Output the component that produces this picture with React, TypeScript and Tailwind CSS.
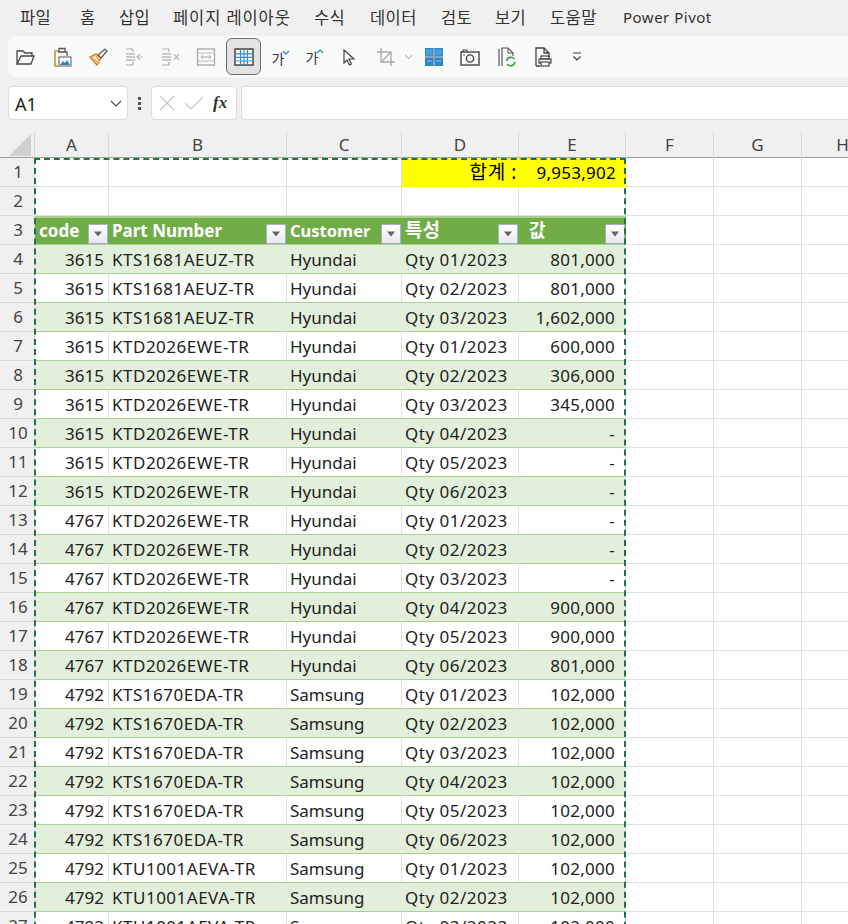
import React from "react";

const cols = "grid-cols-[35px_74px_178px_115px_117px_107px_88px_88px_82px]";

const menus = [
  { label: "파일", w: "w-[60px]" },
  { label: "홈", w: "w-[39px]" },
  { label: "삽입", w: "w-[54px]" },
  { label: "페이지 레이아웃", w: "w-[141px] tracking-[0.9px]" },
  { label: "수식", w: "w-[56px]" },
  { label: "데이터", w: "w-[71px]" },
  { label: "검토", w: "w-[54px]" },
  { label: "보기", w: "w-[55px]" },
  { label: "도움말", w: "w-[73px]" },
];

type Row = [string, string, string, string, string];

const rows: Row[] = [
  ["3615", "KTS1681AEUZ-TR", "Hyundai", "Qty 01/2023", "801,000"],
  ["3615", "KTS1681AEUZ-TR", "Hyundai", "Qty 02/2023", "801,000"],
  ["3615", "KTS1681AEUZ-TR", "Hyundai", "Qty 03/2023", "1,602,000"],
  ["3615", "KTD2026EWE-TR", "Hyundai", "Qty 01/2023", "600,000"],
  ["3615", "KTD2026EWE-TR", "Hyundai", "Qty 02/2023", "306,000"],
  ["3615", "KTD2026EWE-TR", "Hyundai", "Qty 03/2023", "345,000"],
  ["3615", "KTD2026EWE-TR", "Hyundai", "Qty 04/2023", "-"],
  ["3615", "KTD2026EWE-TR", "Hyundai", "Qty 05/2023", "-"],
  ["3615", "KTD2026EWE-TR", "Hyundai", "Qty 06/2023", "-"],
  ["4767", "KTD2026EWE-TR", "Hyundai", "Qty 01/2023", "-"],
  ["4767", "KTD2026EWE-TR", "Hyundai", "Qty 02/2023", "-"],
  ["4767", "KTD2026EWE-TR", "Hyundai", "Qty 03/2023", "-"],
  ["4767", "KTD2026EWE-TR", "Hyundai", "Qty 04/2023", "900,000"],
  ["4767", "KTD2026EWE-TR", "Hyundai", "Qty 05/2023", "900,000"],
  ["4767", "KTD2026EWE-TR", "Hyundai", "Qty 06/2023", "801,000"],
  ["4792", "KTS1670EDA-TR", "Samsung", "Qty 01/2023", "102,000"],
  ["4792", "KTS1670EDA-TR", "Samsung", "Qty 02/2023", "102,000"],
  ["4792", "KTS1670EDA-TR", "Samsung", "Qty 03/2023", "102,000"],
  ["4792", "KTS1670EDA-TR", "Samsung", "Qty 04/2023", "102,000"],
  ["4792", "KTS1670EDA-TR", "Samsung", "Qty 05/2023", "102,000"],
  ["4792", "KTS1670EDA-TR", "Samsung", "Qty 06/2023", "102,000"],
  ["4792", "KTU1001AEVA-TR", "Samsung", "Qty 01/2023", "102,000"],
  ["4792", "KTU1001AEVA-TR", "Samsung", "Qty 02/2023", "102,000"],
  ["4792", "KTU1001AEVA-TR", "Samsung", "Qty 03/2023", "102,000"],
];

const RowHead = ({ n }: { n: number }) => (
  <div className="flex items-center justify-center pl-0.5 bg-[#f0f0f0] border-r border-b border-[#d9d9d9] text-[#444] text-[17px]">
    {n}
  </div>
);

const Blank = () => <div className="border-r border-b border-[#e0e0e0]" />;

const FilterBtn = () => (
  <div className="absolute right-[1px] top-[6px] w-[20px] h-[20px] flex items-center justify-center border border-[#a7aec8] bg-gradient-to-b from-white to-[#e6e8f0]">
    <svg width="10" height="6" viewBox="0 0 10 6">
      <path d="M1 0.5h8L5 5.5z" fill="#666" />
    </svg>
  </div>
);

const HeadCell = ({ text, className = "" }: { text: string; className?: string }) => (
  <div className={`relative bg-[#70ad47] text-white font-bold border-t-2 border-[#a9d08e] border-b border-b-[#a9d08e] pl-[3px] whitespace-nowrap overflow-hidden leading-[26px] ${className}`}>
    <span>{text}</span>
    <FilterBtn />
  </div>
);

const Icon = ({ children, className = "" }: { children: React.ReactNode; className?: string }) => (
  <div className={`w-[36px] h-[36px] flex items-center justify-center ${className}`}>
    <svg width="22" height="22" viewBox="0 0 22 22" fill="none">
      {children}
    </svg>
  </div>
);

const Toolbar = () => (
  <div className="ml-2 h-[41px] flex items-center bg-[#f9fbfb] rounded-l-lg">
    <Icon>
      <path d="M2 18V5h6l2 2h7v3M2 18h14l3-8H6z" stroke="#444" strokeWidth="1.3" />
    </Icon>
    <Icon className="ml-[1px]">
      <path d="M6 5H3v15h3" stroke="#d08a35" strokeWidth="1.5" />
      <path d="M7 6V2.5h6V6M6 6h9v4" stroke="#555" strokeWidth="1.3" />
      <rect x="7" y="11" width="12" height="9" fill="#fff" stroke="#555" strokeWidth="1" />
      <path d="M8 19l3-4 2 2 2-3 3 5z" fill="#2f7fc4" />
    </Icon>
    <Icon>
      <path d="M2 11l7 8 4-7-5-4z" fill="#f6e3c4" stroke="#d9821f" strokeWidth="1.4" />
      <path d="M5 12l4 4M8 10l3 4" stroke="#d9821f" strokeWidth="1" />
      <path d="M10 9l7-6 2 2-6 7z" fill="#fff" stroke="#555" strokeWidth="1.2" />
    </Icon>
    <Icon className="-ml-[1px]">
      <path d="M3 3h7M3 19h7M10 3v3M10 16v3" stroke="#aaa" strokeWidth="1.2" />
      <path d="M3 8h9M3 11h9M3 14h9" stroke="#bbb" strokeWidth="1.6" />
      <path d="M20 11h-6M17 8l-3 3 3 3" stroke="#bbb" strokeWidth="1.2" />
    </Icon>
    <Icon>
      <path d="M3 3h7M3 19h7M10 3v3M10 16v3" stroke="#aaa" strokeWidth="1.2" />
      <path d="M3 8h9M3 11h9M3 14h9" stroke="#bbb" strokeWidth="1.6" />
      <path d="M15 8l5 6M20 8l-5 6" stroke="#bbb" strokeWidth="1.2" />
    </Icon>
    <Icon>
      <rect x="2.5" y="3" width="17" height="16" stroke="#aaa" strokeWidth="1.4" />
      <path d="M2.5 7h17M2.5 15h17" stroke="#bbb" strokeWidth="1.2" />
      <path d="M6 11h10M8 9l-2 2 2 2M14 9l2 2-2 2" stroke="#aaa" strokeWidth="1" />
    </Icon>
    <div className="ml-[2px] w-[35px] h-[37px] flex items-center justify-center bg-[#e3e3e3] border border-[#6e6e6e] rounded-md">
      <svg width="20" height="18" viewBox="0 0 20 18" fill="none">
        <rect x="1" y="1" width="18" height="16" fill="#fff" stroke="#444" strokeWidth="1.5" />
        <path d="M1 5.8h18M1 9.3h18M1 13h18M6.6 2v15M10 2v15M13.4 2v15" stroke="#2f8fd8" strokeWidth="1.2" />
      </svg>
    </div>
    <div className="w-[34px] h-[36px] flex items-center justify-center text-[14px] text-[#333] relative">
      <span className="mt-[3px]">가</span>
      <svg className="absolute right-[5px] top-[11px]" width="8" height="6" viewBox="0 0 8 6" fill="none">
        <path d="M1 1l3 3 3-3" stroke="#2f8fd8" strokeWidth="1.4" />
      </svg>
    </div>
    <div className="w-[34px] h-[36px] flex items-center justify-center text-[14px] text-[#333] relative">
      <span className="mt-[1px]">가</span>
      <svg className="absolute right-[5px] top-[9px]" width="8" height="6" viewBox="0 0 8 6" fill="none">
        <path d="M1 5l3-3 3 3" stroke="#2f8fd8" strokeWidth="1.4" />
      </svg>
    </div>
    <Icon className="ml-[1px]">
      <path d="M7 4l10 9h-5l2.5 5-2 1-2.5-5L7 17z" fill="#fff" stroke="#444" strokeWidth="1.2" />
    </Icon>
    <Icon className="ml-[2px]">
      <path d="M6 2v14h14M2 6h14v14M6 16L16 6" stroke="#aaa" strokeWidth="1.4" />
    </Icon>
    <svg className="mr-[3px]" width="9" height="6" viewBox="0 0 9 6" fill="none">
      <path d="M1 1l3.5 3.5L8 1" stroke="#bbb" strokeWidth="1.1" />
    </svg>
    <Icon>
      <path d="M2 2h8.5v8.5H2zM11.5 2H20v8.5h-8.5zM2 11.5h8.5V20H2zM11.5 11.5H20V20h-8.5z" fill="#2e86cf" />
      <path d="M3 3h6.5v6.5H3zM12.500 3H19v6.500h-6.500z" fill="#4a9bdc" />
      <path d="M11 2v18M2 11h18" stroke="#7d8a94" strokeWidth="1.2" />
      <path d="M4 15h5M13 15h5" stroke="#9ac4e6" strokeWidth="1.2" />
    </Icon>
    <Icon>
      <rect x="2" y="6" width="18" height="13" stroke="#444" strokeWidth="1.4" />
      <path d="M4 6V4h4v2" stroke="#444" strokeWidth="1.2" />
      <circle cx="11" cy="12.5" r="3.6" stroke="#444" strokeWidth="1.4" />
      <path d="M4.5 9h1" stroke="#444" strokeWidth="1.4" />
    </Icon>
    <Icon className="ml-[1px]">
      <path d="M3 3v17M6 20V2h6l5 5v3" stroke="#555" strokeWidth="1.2" />
      <path d="M12 2v5h5" stroke="#555" strokeWidth="1" />
      <circle cx="14.5" cy="15.5" r="6" fill="#f9fbfb" />
      <path d="M10.5 15a4.5 4.5 0 0 1 8-2M19 16a4.5 4.5 0 0 1-8 2" stroke="#3aa53a" strokeWidth="1.6" />
    </Icon>
    <Icon>
      <path d="M4 20V2h8l5 5v4M4 20h4M12 2v5h5" stroke="#444" strokeWidth="1.3" />
      <rect x="9" y="10" width="8" height="3" stroke="#444" strokeWidth="1.2" />
      <rect x="7" y="13" width="12" height="4" stroke="#444" strokeWidth="1.2" />
      <rect x="9" y="16" width="8" height="4" fill="#fff" stroke="#444" strokeWidth="1.2" />
    </Icon>
    <div className="ml-[5px] w-[22px] flex justify-center">
      <svg width="10" height="10" viewBox="0 0 10 10" fill="none">
        <path d="M1 1h8M1.5 4.5L5 8l3.5-3.5" stroke="#333" strokeWidth="1.1" />
      </svg>
    </div>
  </div>
);

const FormulaBar = () => (
  <div className="mt-[9px] h-[34px] flex items-stretch">
    <div className="ml-2 w-[120px] flex items-center justify-between pl-[6px] pr-[4px] bg-white border border-[#dcdcdc] rounded-[4px] text-[18px] text-[#222]">
      <span className="mt-[2px]">A1</span>
      <svg width="12" height="7" viewBox="0 0 12 7" fill="none" className="mr-[1px]">
        <path d="M1 1l5 5 5-5" stroke="#444" strokeWidth="1.1" />
      </svg>
    </div>
    <div className="w-[23px] flex flex-col items-center justify-center gap-[2px]">
      <div className="w-[3px] h-[3px] bg-[#555]" />
      <div className="w-[3px] h-[3px] bg-[#555]" />
      <div className="w-[3px] h-[3px] bg-[#555]" />
    </div>
    <div className="w-[86px] flex items-center pl-[7px] bg-white border border-[#dcdcdc] rounded-[4px]">
      <svg width="16" height="16" viewBox="0 0 16 16" fill="none">
        <path d="M1 1l14 14M15 1L1 15" stroke="#c4c4c4" strokeWidth="1.1" />
      </svg>
      <svg className="ml-[9px]" width="20" height="16" viewBox="0 0 20 16" fill="none">
        <path d="M1 8l6 6L19 2" stroke="#c4c4c4" strokeWidth="1.1" />
      </svg>
      <span className="ml-[9px] text-[17px] font-bold italic text-[#333] [font-family:'Liberation_Serif',serif]">fx</span>
    </div>
    <div className="ml-[4px] flex-1 bg-white border border-[#dcdcdc] border-r-0 rounded-l-[4px]" />
  </div>
);

const ColHead = () => (
  <div className={`mt-[12px] h-[26px] grid ${cols} bg-[#f0f0f0] border-b border-[#9e9e9e] text-[17px] text-[#444]`}>
    <div className="border-r border-[#d9d9d9] relative">
      <svg className="absolute right-[3px] bottom-[2px]" width="22" height="22" viewBox="0 0 22 22">
        <path d="M22 0v22H0z" fill="#d0d0d0" />
      </svg>
    </div>
    {["A", "B", "C", "D", "E", "F", "G", "H"].map((c) => (
      <div key={c} className="flex items-center justify-center border-r border-[#d9d9d9]">
        {c}
      </div>
    ))}
  </div>
);

const Sheet = () => (
  <div className="relative">
    <div className={`h-[29px] grid ${cols}`}>
      <RowHead n={1} />
      <Blank />
      <Blank />
      <Blank />
      <div className="flex items-center justify-end pr-[2px] bg-[#ffff00] text-[19px] tracking-[0.6px] text-black">합계 :</div>
      <div className="flex items-center justify-end pr-[10px] bg-[#ffff00] text-[17px] tracking-[0.25px] text-black">9,953,902</div>
      <Blank />
      <Blank />
      <Blank />
    </div>
    <div className={`h-[29px] grid ${cols}`}>
      <RowHead n={2} />
      <Blank />
      <Blank />
      <Blank />
      <Blank />
      <Blank />
      <Blank />
      <Blank />
      <Blank />
    </div>
    <div className={`h-[29px] grid ${cols}`}>
      <RowHead n={3} />
      <HeadCell text="code" className="!pl-[4px] text-[17px]" />
      <HeadCell text="Part Number" className="text-[17px]" />
      <HeadCell text="Customer" className="text-[16.5px]" />
      <HeadCell text="특성" className="text-[19px] !leading-[25px]" />
      <HeadCell text="값" className="!pl-[10px] text-[18px] !leading-[24px]" />
      <Blank />
      <Blank />
      <Blank />
    </div>
    {rows.map((r, i) => {
      const band = i % 2 === 0;
      const line = band ? "border-r-[#e2efda]" : "border-r-[#e0e0e0]";
      const cell = `flex items-center pt-[1px] text-[17px] text-[#222] whitespace-nowrap overflow-hidden border-b border-b-[#a9d08e] border-r ${line} ${band ? "bg-[#e2efda]" : "bg-white"}`;
      return (
        <div key={i} className={`h-[29px] grid ${cols}`}>
          <RowHead n={i + 4} />
          <div className={`${cell} justify-end pr-[4px]`}>{r[0]}</div>
          <div className={`${cell} pl-[3px] tracking-[0.5px]`}>{r[1]}</div>
          <div className={`${cell} pl-[3px]`}>{r[2]}</div>
          <div className={`${cell} pl-[3px] tracking-[0.5px]`}>{r[3]}</div>
          <div className={`${cell} justify-end pr-[10px] tracking-[0.25px]`}>{r[4]}</div>
          <Blank />
          <Blank />
          <Blank />
        </div>
      );
    })}
    {/* copy selection marching ants */}
    <div className="absolute left-[34px] top-0 w-[592px] h-[800px] border-2 border-dashed border-[#217346] pointer-events-none" />
  </div>
);

export default function App() {
  return (
    <div className="w-[848px] h-[924px] overflow-hidden bg-[#f0f0f0] [font-family:'Noto_Sans','Noto_Sans_CJK_KR',sans-serif]">
      <div className="h-[36px] flex items-center pl-[20px] text-[16.5px] text-[#333] whitespace-nowrap">
        {menus.map((m) => (
          <div key={m.label} className={`${m.w} shrink-0 tracking-[0.4px]`}>
            {m.label}
          </div>
        ))}
        <div className="text-[15px] tracking-[0.5px] -mt-[1px]">Power Pivot</div>
      </div>
      <Toolbar />
      <FormulaBar />
      <ColHead />
      <div className="bg-white">
        <Sheet />
      </div>
    </div>
  );
}
